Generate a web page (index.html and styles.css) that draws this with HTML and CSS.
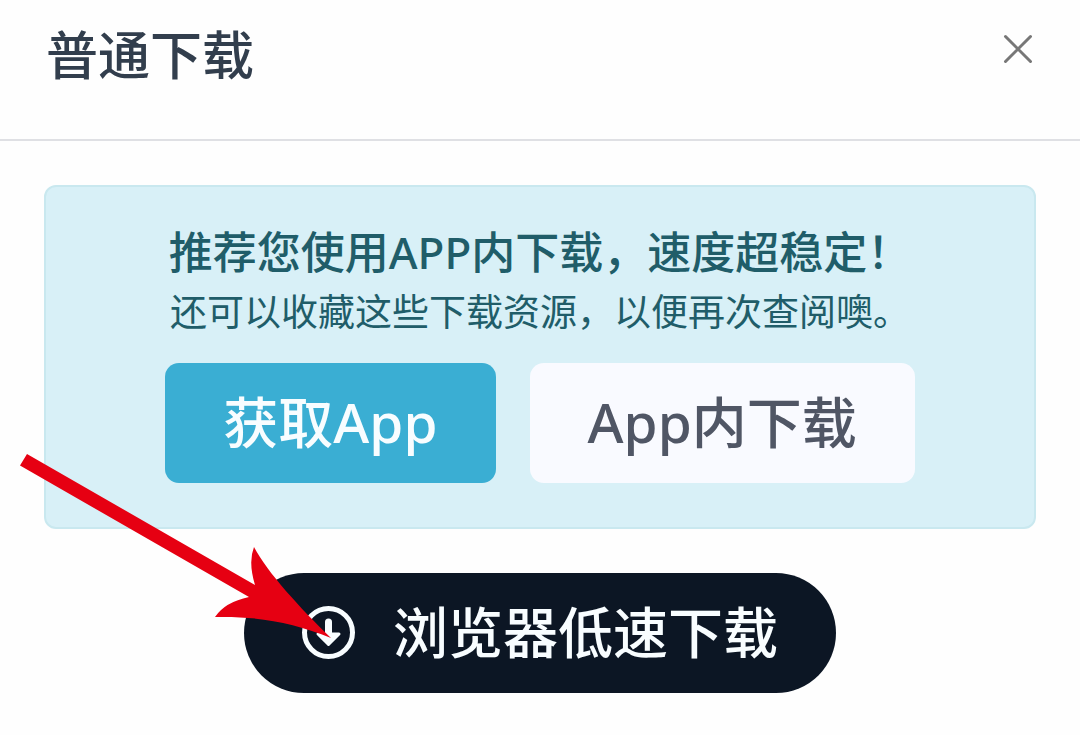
FILE: index.html
```html
<!DOCTYPE html>
<html lang="zh-CN">
<head>
<meta charset="UTF-8">
<meta name="viewport" content="width=device-width, initial-scale=1">
<title>普通下载</title>
<link rel="stylesheet" href="styles.css">
</head>
<body>

<header class="modal-header">
  <h1 class="modal-title">普通下载</h1>
  <button type="button" class="close" aria-label="关闭">
    <svg width="30" height="30" viewBox="0 0 30 30" fill="none" stroke="#777" stroke-width="3" stroke-linecap="round">
      <path d="M2.500 2.500l25 25M27.500 2.500l-25 25"/>
    </svg>
  </button>
</header>

<main class="modal-body">
  <section class="app-tip">
    <h2 class="tip-title">推荐您使用APP内下载，速度超稳定！</h2>
    <p class="tip-text">还可以收藏这些下载资源，以便再次查阅噢。</p>
    <div class="tip-buttons">
      <button type="button" class="btn btn-info">获取App</button>
      <button type="button" class="btn btn-light">App内下载</button>
    </div>
  </section>

  <div class="browser-download">
    <button type="button" class="btn btn-dark">
      <svg class="download-icon" width="53" height="53" viewBox="0 0 53 53" fill="none" stroke="#f8fdff">
        <circle cx="26.500" cy="26.500" r="24" stroke-width="5"/>
        <path d="M26.500 16v14" stroke-width="7" stroke-linecap="round"/>
        <path d="M16 28h21l-10.500 10.500z" fill="#f8fdff" stroke-width="3" stroke-linejoin="round"/>
      </svg>
      <span>浏览器低速下载</span>
    </button>
    <!-- 红色箭头 -->
    <svg class="arrow" width="311" height="184" viewBox="17 454 311 184" aria-hidden="true">
      <path fill="#e60012" d="M24 454L252 585Q245 562 251 547C264 572 297 608 328 638C290 622 252 616 212 617Q222 602 246 597L17 465.500Z"/>
    </svg>
  </div>
</main>

</body>
</html>
```
FILE: styles.css
```css
* {
  box-sizing: border-box;
}
body {
  margin: 0;
  background-color: #fefefe;
  font-family: 'Noto Sans', 'Noto Sans CJK SC', sans-serif;
}
h1, h2, p {
  margin: 0;
}
button {
  font-family: inherit;
  border: none;
  cursor: pointer;
}

.modal-header {
  display: flex;
  justify-content: space-between;
  align-items: flex-start;
  padding: 19px 44px 48px 46px;
  border-bottom: 2px solid #dfe0e4;
}
.modal-title {
  font-size: 52px;
  line-height: 72px;
  font-weight: 500;
  color: #323e4d;
}
.close {
  display: flex;
  padding: 15px 3px;
  background: none;
}

.modal-body {
  padding: 44px 44px 40px;
}
.app-tip {
  padding: 33px 20px 44px;
  border: 2px solid #c9e8ef;
  border-radius: 12px;
  background-color: #d8f0f7;
  color: #205d69;
  text-align: center;
}
.tip-title {
  font-size: 44px;
  line-height: 64px;
  font-weight: 500;
}
.tip-text {
  font-size: 37px;
  line-height: 56px;
}
.tip-buttons {
  display: flex;
  justify-content: center;
  gap: 34px;
  margin-top: 23px;
}

.btn {
  height: 120px;
  padding: 0 58px 2px;
  border-radius: 14px;
  font-size: 55px;
  line-height: 76px;
  font-weight: 500;
  white-space: nowrap;
}
.btn-info {
  background-color: #3aaed3;
  color: #f8fdff;
}
.btn-light {
  background-color: #f9faff;
  color: #505665;
}
.btn-dark {
  display: flex;
  align-items: center;
  gap: 38px;
  border-radius: 60px;
  background-color: #0c1624;
  color: #f8fdff;
}

.browser-download {
  position: relative;
  width: fit-content;
  margin: 44px auto 0;
}
.arrow {
  position: absolute;
  left: -224px;
  bottom: 55px;
  pointer-events: none;
}
```
